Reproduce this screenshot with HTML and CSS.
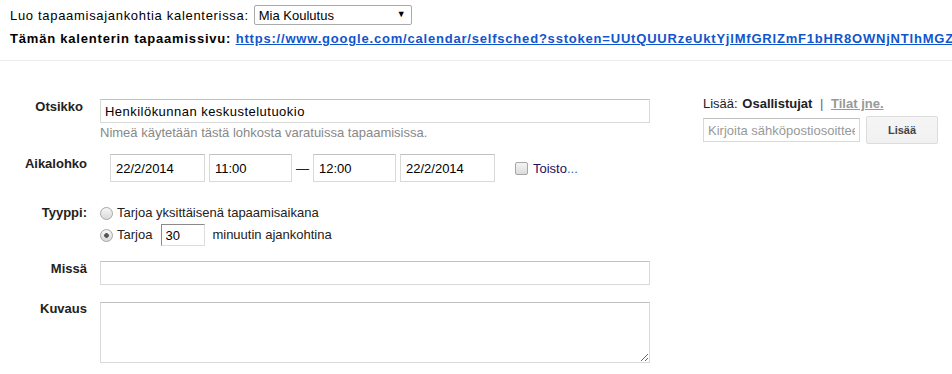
FILE: index.html
```html
<!DOCTYPE html>
<html lang="fi">
<head>
  <meta charset="UTF-8" />
  <title>Tapaamisajankohdat</title>
  <link rel="stylesheet" href="styles.css">
</head>
<body>
  <header class="top">
    <div class="cal-row">
      <span class="cal-label">Luo tapaamisajankohtia kalenterissa:</span>
      <span class="select-wrap">
        <select class="cal-select">
          <option>Mia Koulutus</option>
        </select>
        <span class="arrow">▼</span>
      </span>
    </div>
    <div class="page-row">
      <b>Tämän kalenterin tapaamissivu:</b>
      <a class="page-link" href="#">https://www.google.com/calendar/selfsched?sstoken=UUtQUURzeUktYjlMfGRlZmF1bHR8OWNjNTlhMGZ</a>
    </div>
  </header>

  <main class="content">
    <div class="form">
      <div class="row row-title">
        <div class="lbl lbl-title">Otsikko</div>
        <div class="field">
          <input class="text wide title-input" type="text" value="Henkilökunnan keskustelutuokio" />
          <div class="hint">Nimeä käytetään tästä lohkosta varatuissa tapaamisissa.</div>
        </div>
      </div>

      <div class="row row-time">
        <div class="lbl lbl-time">Aikalohko</div>
        <div class="field times">
          <input class="text date" type="text" value="22/2/2014" />
          <input class="text time" type="text" value="11:00" />
          <span class="dash">—</span>
          <input class="text time" type="text" value="12:00" />
          <input class="text date" type="text" value="22/2/2014" />
          <label class="repeat"><span class="check"></span><span class="repeat-text">Toisto<span class="dots">...</span></span></label>
        </div>
      </div>

      <div class="row row-type">
        <div class="lbl">Tyyppi:</div>
        <div class="field">
          <label class="opt"><span class="radio"></span><span>Tarjoa yksittäisenä tapaamisaikana</span></label>
          <label class="opt opt-slots"><span class="radio on"></span><span>Tarjoa</span><input class="minutes" type="text" value="30" /><span class="minutes-text">minuutin ajankohtina</span></label>
        </div>
      </div>

      <div class="row row-where">
        <div class="lbl">Missä</div>
        <div class="field">
          <input class="text wide" type="text" />
        </div>
      </div>

      <div class="row row-desc">
        <div class="lbl lbl-desc">Kuvaus</div>
        <div class="field">
          <textarea class="desc"></textarea>
        </div>
      </div>
    </div>

    <aside class="guests">
      <div class="tabs">
        <span class="tabs-lead">Lisää:</span>
        <b class="tab-on">Osallistujat</b>
        <span class="sep">|</span>
        <a class="tab-off" href="#">Tilat jne.</a>
      </div>
      <div class="add-row">
        <input class="text email" type="text" placeholder="Kirjoita sähköpostiosoitteet" />
        <button class="add-btn">Lisää</button>
      </div>
    </aside>
  </main>
</body>
</html>
```

FILE: styles.css
```css
body {
  margin: 0;
  font-family: "Liberation Sans", Arial, sans-serif;
  font-size: 13px;
  color: #222;
  background: #fff;
  overflow: hidden;
}

.top {
  padding: 5px 0 14px 10px;
  border-bottom: 1px solid #ebebeb;
  white-space: nowrap;
  color: #000;
}

.cal-row {
  display: flex;
  align-items: baseline;
  gap: 5px;
  line-height: 15px;
}

.cal-label {
  letter-spacing: 0.69px;
}

.select-wrap {
  position: relative;
  display: inline-block;
}

.cal-select {
  appearance: none;
  width: 158px;
  height: 20px;
  padding: 0 0 0 4px;
  border: 1px solid #a9a9a9;
  border-radius: 2px;
  background: #fff;
  font: inherit;
  color: #000;
}

.arrow {
  position: absolute;
  right: 6px;
  top: 5px;
  font-size: 9px;
  line-height: 9px;
  color: #000;
}

.page-row {
  margin-top: 6px;
  line-height: 15px;
  font-weight: bold;
  letter-spacing: 0.8px;
}

.page-link {
  color: #1155cc;
}

.content {
  display: flex;
}

.form {
  width: 650px;
  padding-top: 38px;
}

.row {
  display: flex;
}

.lbl {
  width: 87px;
  padding-right: 1px;
  text-align: right;
  font-weight: bold;
  line-height: 15px;
  color: #222;
}

.lbl-title {
  width: 83px;
  padding-right: 5px;
}

.lbl-time {
  padding-top: 2px;
}

.lbl-desc {
  margin-top: -1px;
}

.field {
  margin-left: 12px;
}

.text {
  box-sizing: border-box;
  height: 24px;
  padding: 0 4px;
  border: 1px solid #d9d9d9;
  border-top-color: #c0c0c0;
  font: inherit;
  color: #000;
  outline: none;
}

.wide {
  width: 550px;
}

.title-input {
  letter-spacing: 0.47px;
}

.hint {
  margin-top: 2px;
  line-height: 16px;
  color: #888;
}

.row-time {
  margin-top: 13px;
}

.times {
  display: flex;
  align-items: center;
  padding-left: 10px;
}

.times .text {
  height: 28px;
  padding: 0 5px;
}

.date {
  width: 95px;
}

.time {
  width: 83px;
}

.date + .time,
.time + .date {
  margin-left: 4px;
}

.dash {
  margin: 0 4px 0 4px;
  color: #222;
}

.repeat {
  display: flex;
  align-items: center;
  margin-left: 20px;
}

.check {
  box-sizing: border-box;
  width: 13px;
  height: 13px;
  border: 1px solid #a6a6a6;
  border-radius: 2px;
  background: linear-gradient(#f4f4f4, #dcdcdc);
  margin-right: 5px;
}

.repeat-text {
  color: #22105a;
}

.dots {
  color: #3366cc;
}

.row-type {
  margin-top: 23px;
}

.opt {
  display: flex;
  align-items: center;
  line-height: 16px;
  color: #222;
}

.opt-slots {
  margin-top: 3px;
  height: 22px;
}

.radio {
  box-sizing: border-box;
  width: 13px;
  height: 13px;
  border: 1px solid #a6a6a6;
  border-radius: 50%;
  background: linear-gradient(#f6f6f6, #dadada);
  margin-right: 4px;
}

.radio.on {
  background: radial-gradient(circle, #555 0, #555 2px, transparent 2.6px), linear-gradient(#f6f6f6, #dadada);
}

.minutes {
  box-sizing: border-box;
  width: 44px;
  height: 22px;
  margin-left: 9px;
  padding: 0 3px;
  border: 1px solid #ddd;
  border-top-color: #8a8a8a;
  border-left-color: #8a8a8a;
  font: inherit;
  color: #000;
  outline: none;
}

.minutes-text {
  margin-left: 7px;
}

.row-where {
  margin-top: 15px;
}

.row-desc {
  margin-top: 17px;
}

.desc {
  box-sizing: border-box;
  display: block;
  width: 550px;
  height: 61px;
  border: 1px solid #d9d9d9;
  border-top-color: #c0c0c0;
  font: inherit;
  outline: none;
}

.guests {
  margin-left: 53px;
  padding-top: 35px;
  white-space: nowrap;
}

.tabs {
  line-height: 15px;
  color: #222;
}

.tab-on {
  margin-left: 1px;
}

.sep {
  margin: 0 4px;
  color: #666;
}

.tab-off {
  font-weight: bold;
  color: #999;
}

.add-row {
  display: flex;
  align-items: center;
  margin-top: 5px;
}

.email {
  width: 157px;
}

.email::placeholder {
  color: #999;
}

.add-btn {
  width: 72px;
  height: 28px;
  margin-left: 6px;
  border: 1px solid #dcdcdc;
  border-radius: 2px;
  background: linear-gradient(#f5f5f5, #f1f1f1);
  font-family: inherit;
  font-size: 11px;
  font-weight: bold;
  color: #444;
}
```
